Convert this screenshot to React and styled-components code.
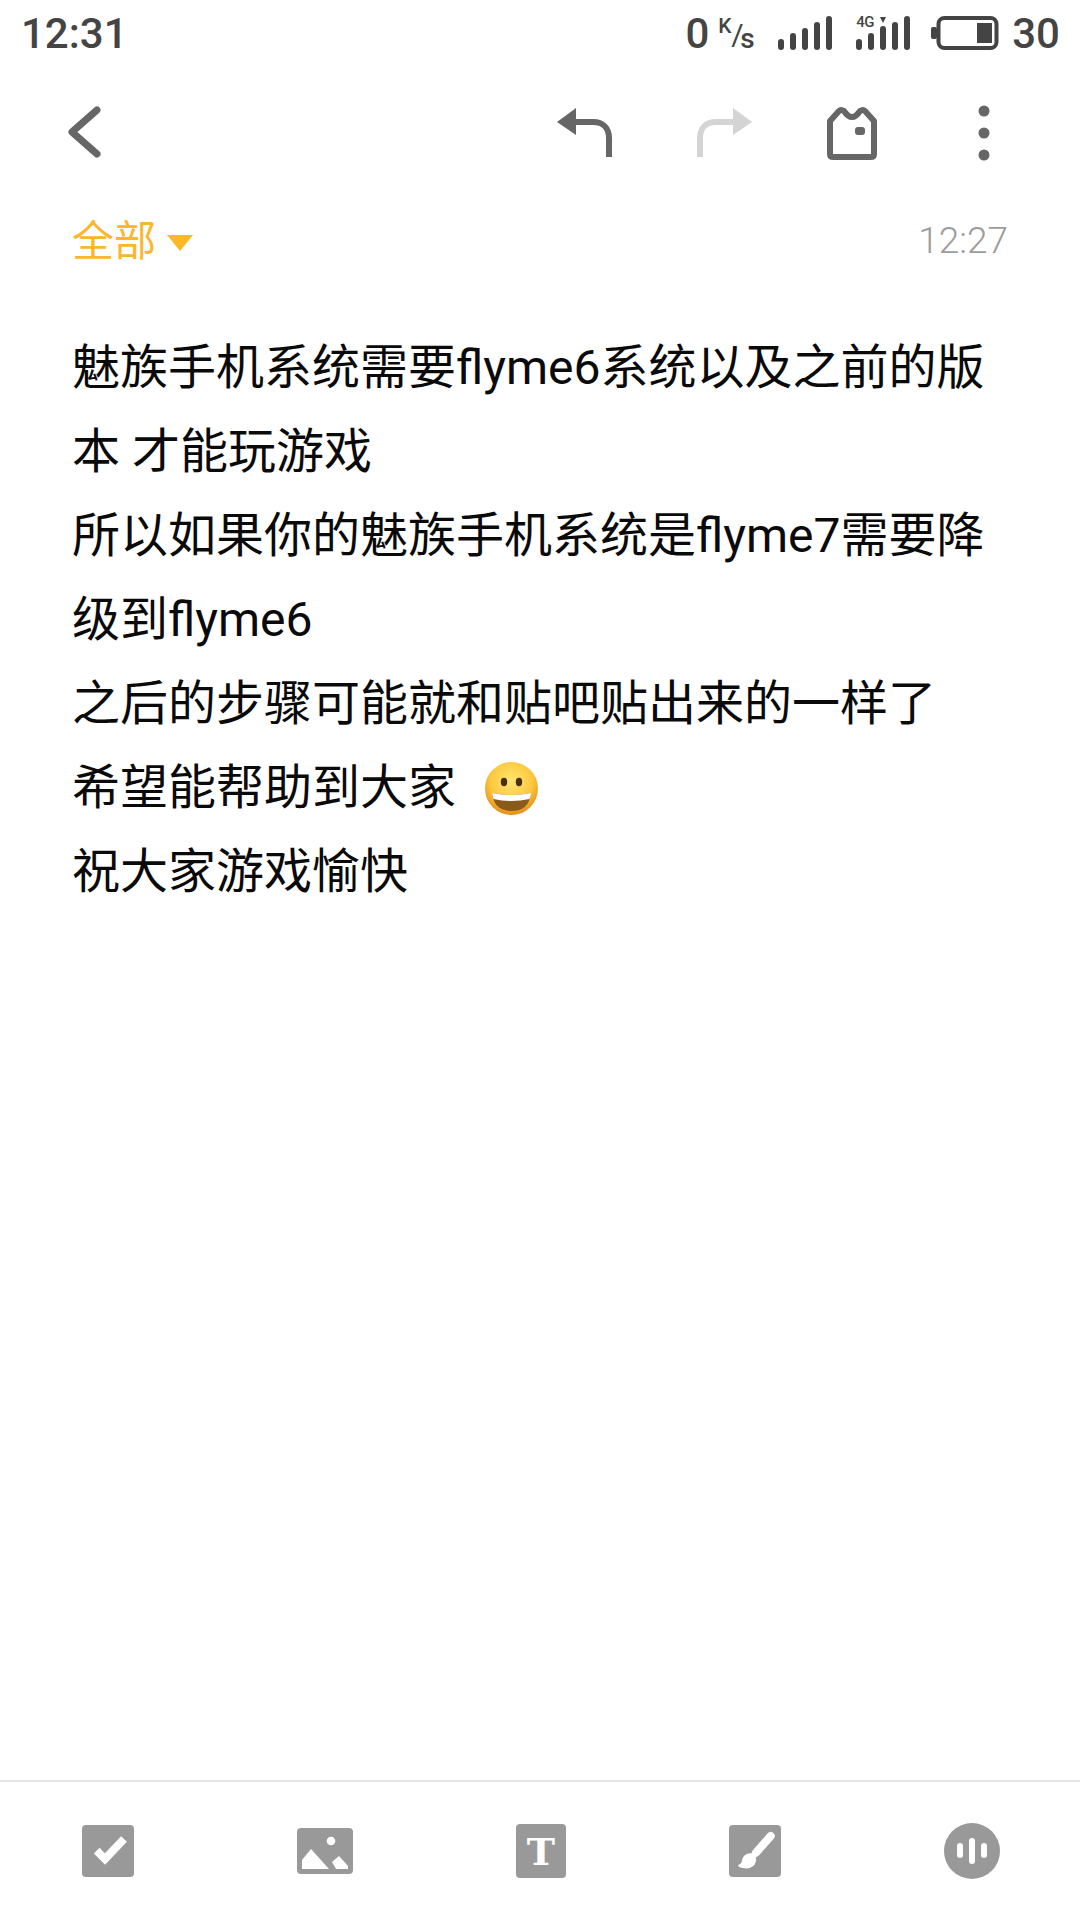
import React from 'react';
import styled, { createGlobalStyle } from 'styled-components';

const GlobalStyle = createGlobalStyle`
  html, body {
    margin: 0;
    padding: 0;
    background: #fff;
  }
`;

const Page = styled.div`
  width: 1080px;
  height: 1920px;
  display: flex;
  flex-direction: column;
  background: #fff;
  font-family: "Noto Sans CJK SC", "Noto Sans", sans-serif;
  overflow: hidden;
`;

const StatusBar = styled.div`
  height: 66px;
  display: flex;
  align-items: center;
  justify-content: space-between;
  padding: 0 20px 0 21px;
  color: #444;
  font-family: Roboto, sans-serif;
  font-weight: 500;
  font-size: 42px;
`;

const StatusRight = styled.div`
  display: flex;
  align-items: center;
  gap: 24px;
`;

const NetSpeed = styled.div`
  display: flex;
  align-items: center;
  gap: 9px;
`;

const SpeedUnit = styled.div`
  position: relative;
  width: 36px;
  height: 34px;
`;

const UnitPart = styled.span`
  position: absolute;
  left: ${(p) => p.$left}px;
  top: ${(p) => p.$top}px;
  font-size: ${(p) => p.$size}px;
  line-height: 1;
  font-weight: ${(p) => p.$weight || 500};
`;

const SignalBox = styled.div`
  position: relative;
  width: 54px;
  height: 34px;
`;

const NetworkLabel = styled.span`
  position: absolute;
  left: 0;
  top: -1px;
  font-size: 15px;
  line-height: 15px;
  letter-spacing: -0.5px;
`;

const BatteryGroup = styled.div`
  display: flex;
  align-items: center;
  gap: 13px;
  margin-left: -3px;
`;

const Toolbar = styled.div`
  height: 134px;
  display: flex;
  align-items: center;
  padding-left: 67px;
`;

const ToolIcon = styled.svg`
  display: block;
  flex: none;
  margin-left: ${(p) => p.$left || 0}px;
  transform: ${(p) => (p.$flip ? 'scaleX(-1)' : 'none')};
`;

const MetaRow = styled.div`
  height: 80px;
  display: flex;
  align-items: center;
  justify-content: space-between;
  padding: 0 72px;
`;

const Folder = styled.div`
  display: flex;
  align-items: center;
  gap: 11px;
  color: #fbb62e;
  font-size: 42px;
  line-height: 1;
  margin-bottom: 4px;
`;

const FolderCaret = styled.span`
  width: 0;
  height: 0;
  border-left: 13px solid transparent;
  border-right: 13px solid transparent;
  border-top: 16px solid #fdb827;
  margin-top: 10px;
`;

const MailTime = styled.div`
  color: #9c9c9c;
  font-family: Roboto, sans-serif;
  font-weight: 300;
  font-size: 37px;
`;

const Body = styled.div`
  flex: 1;
  padding: 46px 72px 0;
  color: #0a0a0a;
  font-family: Roboto, "Noto Sans CJK SC", sans-serif;
  font-size: 48px;
  line-height: 84px;
`;

const Line = styled.div`
  height: 84px;
  white-space: pre;
  display: flex;
  align-items: center;
`;

const Emoji = styled.svg`
  display: block;
  margin: 0 0 0 29px;
`;

const BottomBar = styled.div`
  height: 138px;
  border-top: 2px solid #e6e6e6;
  display: flex;
  align-items: center;
  justify-content: space-between;
  padding: 0 80px 0 82px;
`;

const Signal = () => (
  <svg width="54" height="34" viewBox="0 0 54 34" fill="#444" style={{ display: 'block' }}>
    {[23, 17, 12, 6, 0].map((top, i) => (
      <rect key={top} x={i * 12} y={top} width="6" height={34 - top} rx="3" />
    ))}
  </svg>
);

const Signal4G = () => (
  <SignalBox>
    <NetworkLabel>4G</NetworkLabel>
    <svg width="54" height="34" viewBox="0 0 54 34" fill="#444" style={{ display: 'block' }}>
      <polygon points="24,1 30,1 27,7" />
      <rect x="0" y="23" width="6" height="11" rx="3" />
      <rect x="12" y="17" width="6" height="17" rx="3" />
      <rect x="24" y="10" width="6" height="24" rx="3" />
      <rect x="36" y="6" width="6" height="28" rx="3" />
      <rect x="48" y="0" width="6" height="34" rx="3" />
    </svg>
  </SignalBox>
);

const Battery = () => (
  <svg width="68" height="34" viewBox="0 0 68 34" style={{ display: 'block' }}>
    <rect x="0" y="11" width="6" height="12" rx="2" fill="#444" />
    <rect x="7.5" y="2" width="58" height="30" rx="6" fill="none" stroke="#444" strokeWidth="4" />
    <rect x="46" y="7" width="15" height="20" fill="#444" />
  </svg>
);

const ReplyArrow = ({ color, flip, left }) => (
  <ToolIcon $flip={flip} $left={left} width="60" height="54" viewBox="0 0 60 54">
    <polygon points="2,16 21,2 21,29" fill={color} />
    <path d="M20 16 H38 C48 16 54 22 54 32 V51" fill="none" stroke={color} strokeWidth="6" />
  </ToolIcon>
);

const SmileEmoji = () => (
  <Emoji width="53" height="53" viewBox="0 0 53 53">
    <defs>
      <radialGradient id="face" cx="50%" cy="36%" r="66%">
        <stop offset="0%" stopColor="#ffe672" />
        <stop offset="60%" stopColor="#fcc83f" />
        <stop offset="100%" stopColor="#e28a16" />
      </radialGradient>
    </defs>
    <circle cx="26.5" cy="26.5" r="26.5" fill="url(#face)" />
    <ellipse cx="19" cy="20" rx="3.2" ry="4.2" fill="#4a2f0c" />
    <ellipse cx="34" cy="20" rx="3.2" ry="4.2" fill="#4a2f0c" />
    <path d="M7 31 Q26.5 35 46 31 Q44 49 26.5 49 Q9 49 7 31Z" fill="#8a5a1a" />
    <path d="M7 31 Q26.5 35 46 31 Q46 34 44.5 37 Q26.5 41 8.5 37 Q7.5 34 7 31Z" fill="#fff" />
  </Emoji>
);

const lines = [
  '魅族手机系统需要flyme6系统以及之前的版',
  '本 才能玩游戏',
  '所以如果你的魅族手机系统是flyme7需要降',
  '级到flyme6',
  '之后的步骤可能就和贴吧贴出来的一样了',
];

export default function App() {
  return (
    <Page>
      <GlobalStyle />
      <StatusBar>
        <span>12:31</span>
        <StatusRight>
          <NetSpeed>
            <span>0</span>
            <SpeedUnit>
              <UnitPart $left={0} $top={0} $size={21}>K</UnitPart>
              <UnitPart $left={13} $top={4} $size={30} $weight={400}>/</UnitPart>
              <UnitPart $left={22} $top={9} $size={28}>s</UnitPart>
            </SpeedUnit>
          </NetSpeed>
          <Signal />
          <Signal4G />
          <BatteryGroup>
            <Battery />
            <span>30</span>
          </BatteryGroup>
        </StatusRight>
      </StatusBar>

      <Toolbar>
        <ToolIcon width="36" height="54" viewBox="0 0 36 54">
          <polyline points="30,4 5,26 30,48" fill="none" stroke="#666" strokeWidth="7" strokeLinecap="round" strokeLinejoin="round" />
        </ToolIcon>
        <ReplyArrow color="#666" left={452} />
        <ReplyArrow color="#d4d4d4" flip left={79} />
        <ToolIcon $left={73} width="50" height="54" viewBox="0 0 50 54">
          <path d="M3 15 L12 5 Q14 3 17 5 Q25 17 33 5 Q36 3 38 5 L47 15 V48 Q47 51 44 51 H6 Q3 51 3 48 Z" fill="none" stroke="#666" strokeWidth="6" strokeLinejoin="round" />
          <rect x="28" y="21" width="10" height="8" rx="3" fill="#666" />
        </ToolIcon>
        <ToolIcon $left={101} width="12" height="56" viewBox="0 0 12 56" fill="#666">
          <circle cx="6" cy="6" r="5.5" />
          <circle cx="6" cy="28" r="5.5" />
          <circle cx="6" cy="50" r="5.5" />
        </ToolIcon>
      </Toolbar>

      <MetaRow>
        <Folder>
          全部
          <FolderCaret />
        </Folder>
        <MailTime>12:27</MailTime>
      </MetaRow>

      <Body>
        {lines.map((text) => (
          <Line key={text}>{text}</Line>
        ))}
        <Line>
          希望能帮助到大家
          <SmileEmoji />
        </Line>
        <Line>祝大家游戏愉快</Line>
      </Body>

      <BottomBar>
        <ToolIcon width="52" height="52" viewBox="0 0 52 52">
          <rect width="52" height="52" rx="4" fill="#999" />
          <polyline points="14.7,25.7 23,34 42,14" fill="none" stroke="#fff" strokeWidth="8" />
        </ToolIcon>
        <ToolIcon width="56" height="46" viewBox="0 0 56 46">
          <rect width="56" height="46" rx="4" fill="#999" />
          <circle cx="34" cy="13" r="4.3" fill="#fff" />
          <polygon points="5,41 5,32 14,21 32,41" fill="#fff" />
          <polygon points="35,34 42,28 51,38 51,41 39,41" fill="#fff" />
        </ToolIcon>
        <ToolIcon width="50" height="54" viewBox="0 0 50 54">
          <rect width="50" height="54" rx="4" fill="#999" />
          <text x="25" y="41" textAnchor="middle" fontFamily="'DejaVu Serif', serif" fontWeight="700" fontSize="38" fill="#fff">T</text>
        </ToolIcon>
        <ToolIcon width="52" height="52" viewBox="0 0 52 52">
          <rect width="52" height="52" rx="4" fill="#999" />
          <line x1="41.7" y1="11" x2="27" y2="27.7" stroke="#fff" strokeWidth="8" strokeLinecap="round" />
          <path d="M22 28 Q30 31 26 39 Q21 46 10 42 L9 40 Q13 39 13 35 Q14 29 22 28Z" fill="#fff" />
        </ToolIcon>
        <ToolIcon width="56" height="56" viewBox="0 0 56 56">
          <circle cx="28" cy="28" r="28" fill="#999" />
          <rect x="13" y="20" width="6" height="15" rx="3" fill="#fff" />
          <rect x="25" y="15" width="6" height="26" rx="3" fill="#fff" />
          <rect x="37" y="20" width="6" height="15" rx="3" fill="#fff" />
        </ToolIcon>
      </BottomBar>
    </Page>
  );
}
